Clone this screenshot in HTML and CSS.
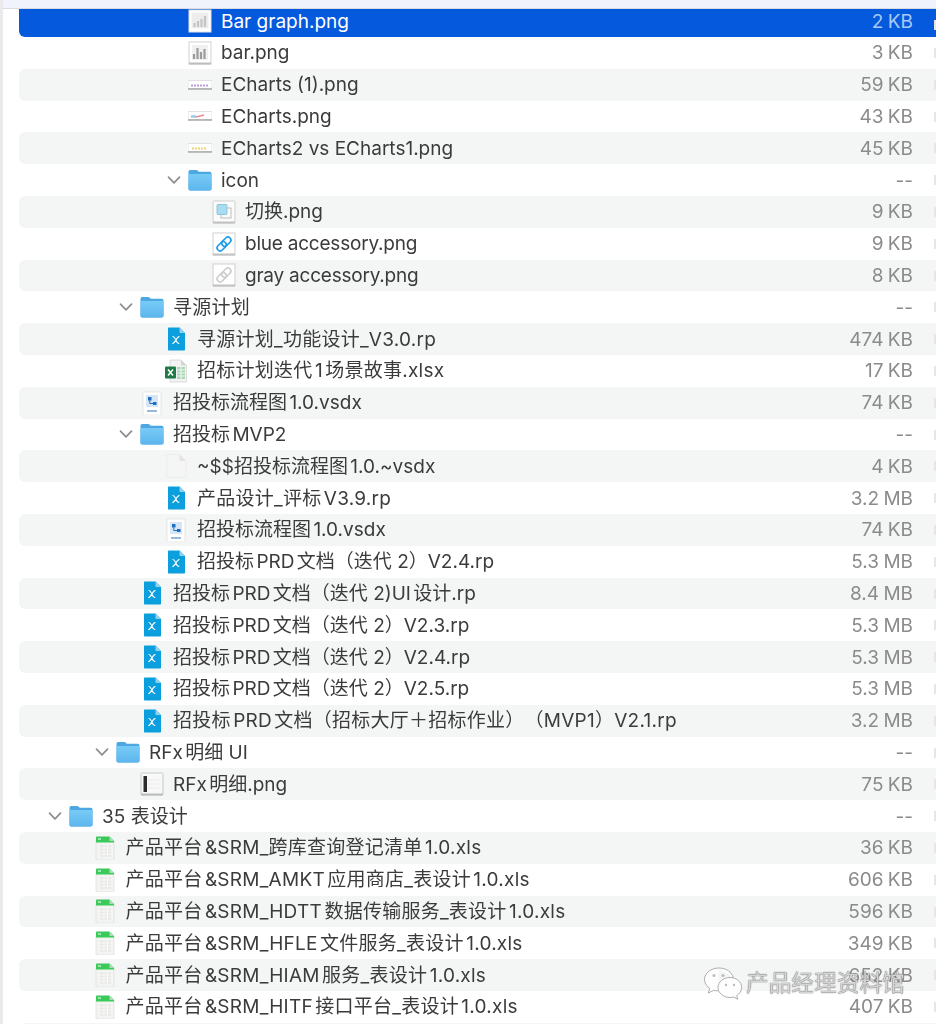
FILE: index.html
```html
<!DOCTYPE html>
<html lang="zh-CN">

<head>
    <meta charset="UTF-8">
    <meta name="viewport" content="width=device-width, initial-scale=1.0">
    <title>Finder</title>
    <link rel="stylesheet" href="styles.css">
</head>

<body>
    <svg class="defs" aria-hidden="true">
        <symbol id="chev" viewBox="0 0 14 14">
            <path d="M1.5 4.2 7 9.8l5.5-5.6" fill="none" stroke="#8d8d8d" stroke-width="1.7" stroke-linecap="round" stroke-linejoin="round"/>
        </symbol>
        <linearGradient id="folder-fill" x1="0" y1="0" x2="0" y2="1">
            <stop offset="0" stop-color="#77cbf7"/>
            <stop offset="1" stop-color="#5db5ec"/>
        </linearGradient>
        <symbol id="folder" viewBox="0 0 24 24">
            <path d="M.5 3.8C.5 2.8 1.2 2 2.2 2h6c.7 0 1.1.3 1.6.8l.9 1h11.100c.9 0 1.700.8 1.700 1.700v15.300c0 1-.8 1.700-1.700 1.700H2.200c-1 0-1.700-.7-1.700-1.700z" fill="#4da8e2"/>
            <path d="M.5 7.300c0-.8.6-1.300 1.300-1.300h20.400c.7 0 1.300.5 1.300 1.300v13.500c0 1-.8 1.700-1.700 1.700H2.200c-1 0-1.700-.7-1.700-1.700z" fill="url(#folder-fill)"/>
        </symbol>
        <symbol id="rp" viewBox="0 0 24 24">
            <path d="M4 1.500C4 .9 4.400.500 5 .500h10.500L21 6v16.500c0 .6-.4 1-1 1H5c-.6 0-1-.4-1-1z" fill="#0b9fdd"/>
            <path d="M15.500.500V5c0 .6.400 1 1 1H21z" fill="#8fd2ef"/>
            <path d="M9 9.500c1.500 0 2 1.500 2.800 3.500.7 1.800 1.200 3 3 3.500M15 9.500c-1.300.6-2.300 2-3.200 3.500-.8 1.400-1.600 2.800-3 3.500" fill="none" stroke="#fff" stroke-width="1.200" stroke-linecap="round"/>
        </symbol>
        <symbol id="xlsx" viewBox="0 0 24 24">
            <path d="M6 1h11l5.500 5.500V23H6z" fill="#f3f3f3" stroke="#cfcfcf" stroke-width=".7"/>
            <path d="M17 1v5.500h5.500z" fill="#d5d5d5"/>
            <path d="M13 8h8v12h-8z" fill="#a9d8b4"/>
            <path d="M13 11h8M13 14h8M13 17h8M17 8v12" stroke="#fff" stroke-width=".8"/>
            <rect x="1" y="7.500" width="11" height="12" rx="1" fill="#1f7a45"/>
            <path d="m4 10.500 5 6m0-6-5 6" stroke="#fff" stroke-width="1.500"/>
        </symbol>
        <symbol id="xls" viewBox="0 0 24 24">
            <path d="M3 5h18v18c0 .5-.4 1-1 1H4c-.6 0-1-.5-1-1z" fill="#f4f4f2" stroke="#d6d6d6" stroke-width=".6"/>
            <path d="M3 1.500C3 1 3.400.500 4 .500h12.500L21 5v1.500H3z" fill="#3bc95a"/>
            <path d="M16.500.500V5H21z" fill="#a8dfb4"/>
            <path d="M7 9h11v12H7z" fill="#e9e9e7"/>
            <path d="M7 12h11M7 15h11M7 18h11M11 9v12M14.500 9v12" stroke="#fff" stroke-width=".7"/>
            <path d="M5 3h3" stroke="#fff" stroke-width="1"/>
        </symbol>
        <symbol id="vsdx" viewBox="0 0 24 24">
            <path d="M3 1h18v23H3z" fill="#fff" stroke="#dcdcdc" stroke-width=".7"/>
            <rect x="6" y="4" width="12" height="12" fill="#d7e6f7"/>
            <path d="M8 6h3.500v3.500H8zM13 11h3.500v3H13z" fill="#1f6fc0"/>
            <path d="M9.800 9.500v3H13" stroke="#1f6fc0" fill="none"/>
            <path d="M7 20h10" stroke="#7fa9d6" stroke-width="1.600"/>
        </symbol>
        <symbol id="blank" viewBox="0 0 24 24">
            <path d="M3 1.500C3 1 3.400.500 4 .500h11.500L22 7v15.500c0 .6-.4 1-1 1H4c-.6 0-1-.4-1-1z" fill="#f5f5f5" stroke="#e6e6e6" stroke-width=".6"/>
            <path d="M15.500.500V6c0 .6.400 1 1 1H22z" fill="#e4e4e4"/>
        </symbol>
        <symbol id="thumb-bar" viewBox="0 0 24 24">
            <rect x="1" y="1" width="22" height="22" fill="#fff" stroke="#d2d2d2"/>
            <rect x="1" y="21.500" width="22" height="2" fill="#bdbdbd"/>
            <rect x="4" y="4" width="16" height="15" fill="#f0f0f0"/>
            <path d="M6 18v-5M9.500 18V7M13 18v-7M16.500 18V8" stroke="#9c9c9c" stroke-width="2.200"/>
        </symbol>
        <symbol id="thumb-bar-sel" viewBox="0 0 24 24">
            <rect x="1" y="1" width="22" height="22" fill="#fff" stroke="#e2e2e2"/>
            <rect x="3.500" y="3.500" width="17" height="16" fill="#ededed"/>
            <path d="M6.500 18v-4M10 18v-6M13.500 18v-8M17 18V7" stroke="#c4c4c4" stroke-width="2.200"/>
        </symbol>
        <symbol id="thumb-e1" viewBox="0 0 24 24">
            <rect x="0" y="7.500" width="24" height="9" rx=".5" fill="#fff" stroke="#cfcfcf" stroke-width=".6"/>
            <rect x="0" y="15" width="24" height="1.800" fill="#b5b5b5"/>
            <path d="M3 12.500h18" stroke="#b9a0d8" stroke-width="2" stroke-dasharray="2 1"/>
        </symbol>
        <symbol id="thumb-e2" viewBox="0 0 24 24">
            <rect x="0" y="7.500" width="24" height="9" rx=".5" fill="#fff" stroke="#cfcfcf" stroke-width=".6"/>
            <rect x="0" y="15" width="24" height="1.800" fill="#b5b5b5"/>
            <path d="M3 12.500h5" stroke="#8fcdea" stroke-width="2.500"/>
            <path d="M8 13l8-2" stroke="#e58c98" stroke-width="1.600"/>
        </symbol>
        <symbol id="thumb-e3" viewBox="0 0 24 24">
            <rect x="0" y="7.500" width="24" height="9" rx=".5" fill="#fff" stroke="#cfcfcf" stroke-width=".6"/>
            <rect x="0" y="15" width="24" height="1.800" fill="#b5b5b5"/>
            <path d="M4 12.500h15" stroke="#ecd27a" stroke-width="2" stroke-dasharray="2 1"/>
        </symbol>
        <symbol id="thumb-switch" viewBox="0 0 24 24">
            <rect x="1" y="1" width="22" height="22" rx="1" fill="#fbfbfb" stroke="#cfcfcf"/>
            <rect x="1" y="21.500" width="22" height="2" fill="#c2c2c2"/>
            <rect x="9" y="8" width="10" height="10" fill="none" stroke="#bdbdbd"/>
            <rect x="5" y="4.500" width="10" height="10" rx="1" fill="#a9dcf0" stroke="#8cc6dd"/>
        </symbol>
        <symbol id="thumb-blue" viewBox="0 0 24 24">
            <rect x="1" y="1" width="22" height="22" fill="#fff" stroke="#cfcfcf"/>
            <rect x="1" y="21.500" width="22" height="2" fill="#c2c2c2"/>
            <g transform="rotate(-45 12 12)" fill="none" stroke="#1c9ce8" stroke-width="1.600">
                <rect x="3.500" y="9" width="10.500" height="6" rx="3"/>
                <rect x="10" y="9" width="10.500" height="6" rx="3"/>
            </g>
        </symbol>
        <symbol id="thumb-gray" viewBox="0 0 24 24">
            <rect x="1" y="1" width="22" height="22" fill="#fff" stroke="#cfcfcf"/>
            <rect x="1" y="21.500" width="22" height="2" fill="#c2c2c2"/>
            <g transform="rotate(-45 12 12)" fill="none" stroke="#cdcdcd" stroke-width="1.600">
                <rect x="3.500" y="9" width="10.500" height="6" rx="3"/>
                <rect x="10" y="9" width="10.500" height="6" rx="3"/>
            </g>
        </symbol>
        <symbol id="thumb-rfx" viewBox="0 0 24 24">
            <rect x="1" y="1" width="22" height="22" rx="1" fill="#f8f8f8" stroke="#c9c9c9"/>
            <rect x="1" y="21.500" width="22" height="2" fill="#bcbcbc"/>
            <rect x="3.500" y="4" width="3.500" height="16" fill="#2c2c2c"/>
            <path d="M8 8h13M8 12h13M8 16h13" stroke="#ececec"/>
        </symbol>
        <symbol id="wechat" viewBox="0 0 40 34">
            <path d="M16 2C8 2 1.500 7 1.500 13.500c0 3.600 2 6.700 5.200 8.800L5.500 27l5-2.700c1.500.4 3 .6 4.500.6" fill="#fff" fill-opacity=".85" stroke="#9a9a9a" stroke-width=".8"/>
            <path d="M16 2c7 0 13 4 14.200 9.700" fill="#fff" stroke="#9a9a9a" stroke-width=".8"/>
            <path d="M27 11.500c-6.500 0-12 4.400-12 10 0 5.500 5.500 10 12 10 1.300 0 2.500-.2 3.700-.5l4 2.300-1-3.800c3-1.800 5-4.700 5-8 0-5.600-5.200-10-11.700-10z" fill="#fff" fill-opacity=".9" stroke="#9a9a9a" stroke-width=".8"/>
            <circle cx="11" cy="9.500" r="1.500" fill="#bbb"/>
            <circle cx="20" cy="9.500" r="1.500" fill="#bbb"/>
            <circle cx="23" cy="19" r="1.200" fill="#bbb"/>
            <circle cx="31" cy="19" r="1.200" fill="#bbb"/>
        </symbol>
    </svg>

    <div class="window">
        <div class="edge"></div>
        <div class="pane">
            <div class="topbar"></div>
            <div class="list">
                <div class="row d5 sel"><svg class="icon"><use href="#thumb-bar-sel"/></svg><span class="name">Bar graph.png</span><span class="size">2 KB</span></div>
                <div class="row d5"><svg class="icon"><use href="#thumb-bar"/></svg><span class="name">bar.png</span><span class="size">3 KB</span></div>
                <div class="row d5 alt"><svg class="icon"><use href="#thumb-e1"/></svg><span class="name">ECharts (1).png</span><span class="size">59 KB</span></div>
                <div class="row d5"><svg class="icon"><use href="#thumb-e2"/></svg><span class="name">ECharts.png</span><span class="size">43 KB</span></div>
                <div class="row d5 alt"><svg class="icon"><use href="#thumb-e3"/></svg><span class="name">ECharts2 vs ECharts1.png</span><span class="size">45 KB</span></div>
                <div class="row d5"><svg class="chev"><use href="#chev"/></svg><svg class="icon"><use href="#folder"/></svg><span class="name">icon</span><span class="size">--</span></div>
                <div class="row d6 alt"><svg class="icon"><use href="#thumb-switch"/></svg><span class="name">切换<span class="ext">.png</span></span><span class="size">9 KB</span></div>
                <div class="row d6"><svg class="icon"><use href="#thumb-blue"/></svg><span class="name tight">blue accessory.png</span><span class="size">9 KB</span></div>
                <div class="row d6 alt"><svg class="icon"><use href="#thumb-gray"/></svg><span class="name tight">gray accessory.png</span><span class="size">8 KB</span></div>
                <div class="row d3"><svg class="chev"><use href="#chev"/></svg><svg class="icon"><use href="#folder"/></svg><span class="name wide">寻源计划</span><span class="size">--</span></div>
                <div class="row d4 alt"><svg class="icon"><use href="#rp"/></svg><span class="name wide">寻源计划_功能设计_V3.0.rp</span><span class="size">474 KB</span></div>
                <div class="row d4"><svg class="icon"><use href="#xlsx"/></svg><span class="name wide">招标计划迭代1场景故事<span class="ext">.xlsx</span></span><span class="size">17 KB</span></div>
                <div class="row d3 alt"><svg class="icon"><use href="#vsdx"/></svg><span class="name">招投标流程图1.0.vsdx</span><span class="size">74 KB</span></div>
                <div class="row d3"><svg class="chev"><use href="#chev"/></svg><svg class="icon"><use href="#folder"/></svg><span class="name">招投标MVP2</span><span class="size">--</span></div>
                <div class="row d4 alt"><svg class="icon"><use href="#blank"/></svg><span class="name">~$$招投标流程图1.0.~vsdx</span><span class="size">4 KB</span></div>
                <div class="row d4"><svg class="icon"><use href="#rp"/></svg><span class="name wide">产品设计_评标V3.9.rp</span><span class="size">3.2 MB</span></div>
                <div class="row d4 alt"><svg class="icon"><use href="#vsdx"/></svg><span class="name">招投标流程图1.0.vsdx</span><span class="size">74 KB</span></div>
                <div class="row d4"><svg class="icon"><use href="#rp"/></svg><span class="name">招投标PRD文档（迭代 2）V2.4.rp</span><span class="size">5.3 MB</span></div>
                <div class="row d3 alt"><svg class="icon"><use href="#rp"/></svg><span class="name">招投标PRD文档（迭代 2)UI设计<span class="ext">.rp</span></span><span class="size">8.4 MB</span></div>
                <div class="row d3"><svg class="icon"><use href="#rp"/></svg><span class="name">招投标PRD文档（迭代 2）V2.3.rp</span><span class="size">5.3 MB</span></div>
                <div class="row d3 alt"><svg class="icon"><use href="#rp"/></svg><span class="name">招投标PRD文档（迭代 2）V2.4.rp</span><span class="size">5.3 MB</span></div>
                <div class="row d3"><svg class="icon"><use href="#rp"/></svg><span class="name">招投标PRD文档（迭代 2）V2.5.rp</span><span class="size">5.3 MB</span></div>
                <div class="row d3 alt"><svg class="icon"><use href="#rp"/></svg><span class="name wide">招投标PRD文档（招标大厅＋招标作业）（MVP1）V2.1.rp</span><span class="size">3.2 MB</span></div>
                <div class="row d2"><svg class="chev"><use href="#chev"/></svg><svg class="icon"><use href="#folder"/></svg><span class="name">RFx明细 UI</span><span class="size">--</span></div>
                <div class="row d3 alt"><svg class="icon"><use href="#thumb-rfx"/></svg><span class="name">RFx明细<span class="ext">.png</span></span><span class="size">75 KB</span></div>
                <div class="row d0"><svg class="chev"><use href="#chev"/></svg><svg class="icon"><use href="#folder"/></svg><span class="name">35 表设计</span><span class="size">--</span></div>
                <div class="row d1 alt"><svg class="icon"><use href="#xls"/></svg><span class="name wide">产品平台&amp;SRM_跨库查询登记清单1.0.xls</span><span class="size">36 KB</span></div>
                <div class="row d1"><svg class="icon"><use href="#xls"/></svg><span class="name wide">产品平台&amp;SRM_AMKT应用商店_表设计1.0.xls</span><span class="size">606 KB</span></div>
                <div class="row d1 alt"><svg class="icon"><use href="#xls"/></svg><span class="name wide">产品平台&amp;SRM_HDTT数据传输服务_表设计1.0.xls</span><span class="size">596 KB</span></div>
                <div class="row d1"><svg class="icon"><use href="#xls"/></svg><span class="name wide">产品平台&amp;SRM_HFLE文件服务_表设计1.0.xls</span><span class="size">349 KB</span></div>
                <div class="row d1 alt"><svg class="icon"><use href="#xls"/></svg><span class="name wide">产品平台&amp;SRM_HIAM服务_表设计1.0.xls</span><span class="size">652 KB</span></div>
                <div class="row d1"><svg class="icon"><use href="#xls"/></svg><span class="name wide">产品平台&amp;SRM_HITF接口平台_表设计1.0.xls</span><span class="size">407 KB</span></div>
                <div class="row d1 alt"></div>
            </div>
        </div>
    </div>

    <div class="watermark">
        <svg class="wechat"><use href="#wechat"/></svg>
        <span>产品经理资料馆</span>
    </div>
</body>

</html>
```

FILE: styles.css
```css
html,
body {
    margin: 0;
    height: 100%;
    overflow: hidden;
    background: #fff;
}

body {
    font-family: Inter, "Noto Sans CJK SC", sans-serif;
    font-size: 19px;
    line-height: 22px;
    color: #3b3b3b;
    text-autospace: normal;
    text-spacing-trim: space-all;
}

.defs {
    position: absolute;
    width: 0;
    height: 0;
}

.window {
    display: flex;
    height: 1024px;
    filter: blur(0.35px);
}

.edge {
    width: 3px;
    background: #ebe9eb;
}

.pane {
    flex: 1;
    min-width: 0;
}

.topbar {
    height: 8px;
    background: #f0f3fb;
    border-bottom: 1px solid #d9dbe0;
}

.list {
    margin-left: 16px;
}

.row {
    display: flex;
    align-items: center;
    height: 31.8px;
    box-sizing: border-box;
    padding-right: 23px;
    border-radius: 6px 0 0 6px;
    position: relative;
}

.row::after {
    content: "";
    position: absolute;
    right: 0;
    top: 11px;
    width: 2px;
    height: 10px;
    background: #e6e6e6;
}

.row:last-child::after {
    display: none;
}

.alt {
    background: #f4f5f5;
}

.sel {
    height: 28px;
    padding-bottom: 4px;
    background: #0559dc;
    color: #fff;
    border-radius: 0 0 0 6px;
}

.sel .size {
    color: #a9c9f7;
}

.d0 { padding-left: 50px; }
.d1 { padding-left: 73.5px; }
.d2 { padding-left: 97px; }
.d3 { padding-left: 121px; }
.d4 { padding-left: 145px; }
.d5 { padding-left: 169px; }
.d6 { padding-left: 193px; }

.chev {
    width: 14px;
    height: 14px;
    margin-left: -21px;
    margin-right: 7px;
    flex: none;
}

.icon {
    width: 24px;
    height: 24px;
    margin-right: 9px;
    flex: none;
}

.name {
    flex: 1;
    padding-top: 1px;
    white-space: nowrap;
}

.wide {
    letter-spacing: 0.25px;
}

.tight {
    letter-spacing: -0.22px;
}

.ext {
    text-autospace: no-autospace;
}

.size {
    padding-top: 1px;
    color: #8b8b8b;
    white-space: nowrap;
    word-spacing: -1px;
}

.watermark {
    position: absolute;
    left: 703px;
    top: 966px;
    display: flex;
    align-items: center;
    gap: 3px;
    font-size: 22.7px;
    line-height: 34px;
    color: rgba(255, 255, 255, 0.75);
    text-shadow: 0 0 1px #555, 0 0 1px #555;
}

.wechat {
    width: 40px;
    height: 34px;
}
```
